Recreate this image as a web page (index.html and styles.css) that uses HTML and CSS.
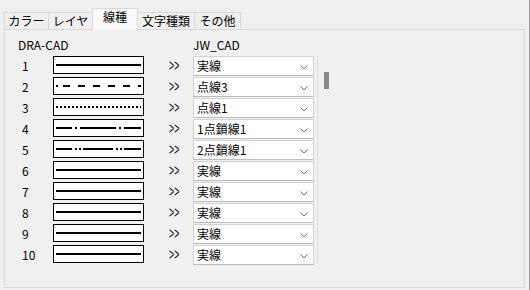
FILE: index.html
```html
<!DOCTYPE html>
<html lang="ja">
<head>
<meta charset="utf-8">
<link rel="stylesheet" href="styles.css">
</head>
<body>
<div class="window">
  <div class="tabs">
    <div class="tab t1">カラー</div>
    <div class="tab t2">レイヤ</div>
    <div class="tab t3 active">線種</div>
    <div class="tab t4">文字種類</div>
    <div class="tab t5">その他</div>
  </div>
  <div class="panel">
    <div class="header">
      <span class="h-dra">DRA-CAD</span>
      <span class="h-jw">JW_CAD</span>
    </div>
    <div class="list">
      <div class="rows">
        <div class="row">
          <span class="num">1</span>
          <span class="box"><svg width="89" height="16"><line x1="2" y1="8" x2="87" y2="8" class="ln"/></svg></span>
          <span class="arrow"><span class="gt">&gt;&gt;</span></span>
          <span class="combo"><span class="ctext">実線</span><svg class="chev" width="8" height="5"><polyline points="0.5,0.5 4,4 7.5,0.5"/></svg></span>
        </div>
        <div class="row">
          <span class="num">2</span>
          <span class="box"><svg width="89" height="16"><line x1="2" y1="8" x2="87" y2="8" class="ln" stroke-dasharray="2 5 7 8 7 8 7 8 7 8 7 8 7 8"/></svg></span>
          <span class="arrow"><span class="gt">&gt;&gt;</span></span>
          <span class="combo"><span class="ctext">点線3</span><svg class="chev" width="8" height="5"><polyline points="0.5,0.5 4,4 7.5,0.5"/></svg></span>
        </div>
        <div class="row">
          <span class="num">3</span>
          <span class="box"><svg width="89" height="16"><line x1="2" y1="8" x2="87" y2="8" class="ln" stroke-dasharray="2 2"/></svg></span>
          <span class="arrow"><span class="gt">&gt;&gt;</span></span>
          <span class="combo"><span class="ctext">点線1</span><svg class="chev" width="8" height="5"><polyline points="0.5,0.5 4,4 7.5,0.5"/></svg></span>
        </div>
        <div class="row">
          <span class="num">4</span>
          <span class="box"><svg width="89" height="16"><line x1="2" y1="8" x2="87" y2="8" class="ln" stroke-dasharray="36 3 2 3" stroke-dashoffset="20"/></svg></span>
          <span class="arrow"><span class="gt">&gt;&gt;</span></span>
          <span class="combo"><span class="ctext">1点鎖線1</span><svg class="chev" width="8" height="5"><polyline points="0.5,0.5 4,4 7.5,0.5"/></svg></span>
        </div>
        <div class="row">
          <span class="num">5</span>
          <span class="box"><svg width="89" height="16"><line x1="2" y1="8" x2="87" y2="8" class="ln" stroke-dasharray="30 3 2 2 2 2" stroke-dashoffset="14"/></svg></span>
          <span class="arrow"><span class="gt">&gt;&gt;</span></span>
          <span class="combo"><span class="ctext">2点鎖線1</span><svg class="chev" width="8" height="5"><polyline points="0.5,0.5 4,4 7.5,0.5"/></svg></span>
        </div>
        <div class="row">
          <span class="num">6</span>
          <span class="box"><svg width="89" height="16"><line x1="2" y1="8" x2="87" y2="8" class="ln"/></svg></span>
          <span class="arrow"><span class="gt">&gt;&gt;</span></span>
          <span class="combo"><span class="ctext">実線</span><svg class="chev" width="8" height="5"><polyline points="0.5,0.5 4,4 7.5,0.5"/></svg></span>
        </div>
        <div class="row">
          <span class="num">7</span>
          <span class="box"><svg width="89" height="16"><line x1="2" y1="8" x2="87" y2="8" class="ln"/></svg></span>
          <span class="arrow"><span class="gt">&gt;&gt;</span></span>
          <span class="combo"><span class="ctext">実線</span><svg class="chev" width="8" height="5"><polyline points="0.5,0.5 4,4 7.5,0.5"/></svg></span>
        </div>
        <div class="row">
          <span class="num">8</span>
          <span class="box"><svg width="89" height="16"><line x1="2" y1="8" x2="87" y2="8" class="ln"/></svg></span>
          <span class="arrow"><span class="gt">&gt;&gt;</span></span>
          <span class="combo"><span class="ctext">実線</span><svg class="chev" width="8" height="5"><polyline points="0.5,0.5 4,4 7.5,0.5"/></svg></span>
        </div>
        <div class="row">
          <span class="num">9</span>
          <span class="box"><svg width="89" height="16"><line x1="2" y1="8" x2="87" y2="8" class="ln"/></svg></span>
          <span class="arrow"><span class="gt">&gt;&gt;</span></span>
          <span class="combo"><span class="ctext">実線</span><svg class="chev" width="8" height="5"><polyline points="0.5,0.5 4,4 7.5,0.5"/></svg></span>
        </div>
        <div class="row">
          <span class="num">10</span>
          <span class="box"><svg width="89" height="16"><line x1="2" y1="8" x2="87" y2="8" class="ln"/></svg></span>
          <span class="arrow"><span class="gt">&gt;&gt;</span></span>
          <span class="combo"><span class="ctext">実線</span><svg class="chev" width="8" height="5"><polyline points="0.5,0.5 4,4 7.5,0.5"/></svg></span>
        </div>
      </div>
      <div class="vline"></div>
      <div class="scroll"><div class="thumb"></div></div>
    </div>
  </div>
</div>
</body>
</html>
```

FILE: styles.css
```css
html, body {
  margin: 0;
  padding: 0;
  background: #f0f0f0;
}
body {
  width: 530px;
  height: 290px;
  overflow: hidden;
  font-family: "Noto Sans CJK JP", "Noto Sans", sans-serif;
  font-size: 12px;
  color: #000;
}
.window {
  box-sizing: border-box;
  width: 530px;
  height: 290px;
  padding: 8px 4px 0 4px;
  border-right: 1px solid #a0a0a0;
}
.tabs {
  display: flex;
  align-items: flex-end;
  height: 21px;
}
.tab {
  box-sizing: border-box;
  height: 17px;
  border: 1px solid #d9d9d9;
  border-bottom: none;
  margin-left: -1px;
  background: #f0f0f0;
  text-align: center;
  line-height: 16px;
}
.t1 { width: 45px; margin-left: 0; }
.t2 { width: 45px; }
.t3 { width: 46px; }
.t4 { width: 58px; }
.t5 { width: 47px; }
.tab.active {
  position: relative;
  z-index: 1;
  height: 22px;
  margin-bottom: -1px;
  background: #f9f9f9;
  line-height: 16px;
}
.panel {
  box-sizing: border-box;
  height: 259px;
  border: 1px solid #d9d9d9;
  background: #f0f0f0;
  padding: 7px 0 0 13px;
}
.header {
  display: flex;
  line-height: 15px;
  height: 15px;
}
.h-dra {
  width: 175px;
}
.list {
  display: flex;
  margin-top: 4px;
  margin-left: 4px;
}
.rows {
  display: flex;
  flex-direction: column;
}
.row {
  display: flex;
  align-items: flex-start;
  height: 21px;
}
.num {
  width: 31px;
  line-height: 20px;
}
.box {
  box-sizing: border-box;
  width: 91px;
  height: 18px;
  border: 1px solid #000;
  background: #fff;
  display: flex;
}
.box svg {
  display: block;
}
.ln {
  stroke: #000;
  stroke-width: 2;
}
.arrow {
  box-sizing: border-box;
  width: 49px;
  height: 20px;
  padding-left: 25px;
  line-height: 20px;
}
.gt {
  display: inline-block;
  font-family: "Liberation Sans", sans-serif;
  font-size: 16px;
  font-weight: 300;
  letter-spacing: 0;
  transform: scaleX(0.55);
  transform-origin: left center;
}
.combo {
  box-sizing: border-box;
  width: 121px;
  height: 20px;
  border: 1px solid #d3d3d3;
  border-bottom-color: #bdbdbd;
  background: #fff;
  display: flex;
  align-items: center;
  justify-content: space-between;
  padding: 0 5px 0 3px;
}
.ctext {
  line-height: 18px;
}
.chev {
  display: block;
  margin-top: 2px;
}
.chev polyline {
  fill: none;
  stroke: #707070;
  stroke-width: 1;
}
.vline {
  width: 1px;
  height: 206px;
  margin-left: 3px;
  background: #dedede;
}
.scroll {
  margin-left: 6px;
  padding-top: 16px;
}
.thumb {
  width: 5px;
  height: 17px;
  background: #888888;
}
```
